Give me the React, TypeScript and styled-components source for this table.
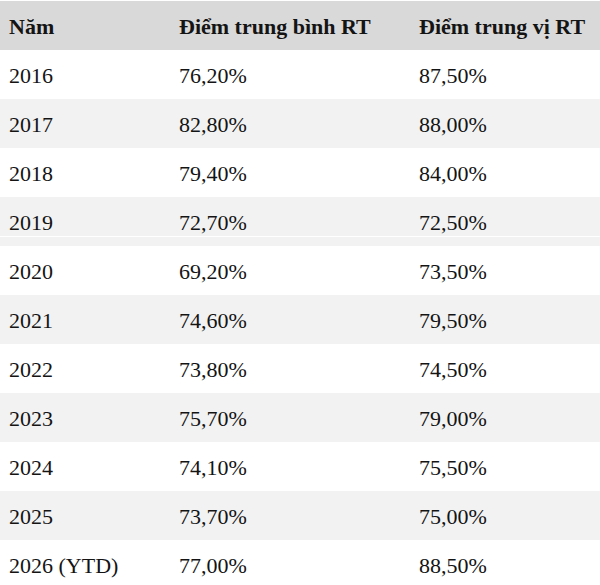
import React from 'react';
import styled, { createGlobalStyle } from 'styled-components';

interface Row {
  year: string;
  mean: string;
  median: string;
}

const rows: Row[] = [
  { year: '2016', mean: '76,20%', median: '87,50%' },
  { year: '2017', mean: '82,80%', median: '88,00%' },
  { year: '2018', mean: '79,40%', median: '84,00%' },
  { year: '2019', mean: '72,70%', median: '72,50%' },
  { year: '2020', mean: '69,20%', median: '73,50%' },
  { year: '2021', mean: '74,60%', median: '79,50%' },
  { year: '2022', mean: '73,80%', median: '74,50%' },
  { year: '2023', mean: '75,70%', median: '79,00%' },
  { year: '2024', mean: '74,10%', median: '75,50%' },
  { year: '2025', mean: '73,70%', median: '75,00%' },
  { year: '2026 (YTD)', mean: '77,00%', median: '88,50%' },
];

const GlobalStyle = createGlobalStyle`
  body {
    margin: 0;
    background: #ffffff;
    font-family: "Liberation Serif", "Times New Roman", serif;
    color: #141414;
  }
`;

const Wrapper = styled.div`
  width: 600px;
  padding-top: 1px;
  overflow: hidden;
`;

const Table = styled.div`
  display: flex;
  flex-direction: column;
`;

const TableRow = styled.div<{ $bg: string; $seam?: boolean }>`
  display: grid;
  grid-template-columns: 170px 240px 1fr;
  height: 49px;
  align-items: center;
  background: ${(p) =>
    p.$seam
      ? `linear-gradient(to bottom, ${p.$bg} 0 39px, #ffffff 39px 40px, ${p.$bg} 40px)`
      : p.$bg};
`;

const Cell = styled.div<{ $head?: boolean }>`
  padding: 2px 0 0 9px;
  font-size: 22px;
  font-weight: ${(p) => (p.$head ? 700 : 400)};
  white-space: nowrap;
`;

const App = (): JSX.Element => {
  return (
    <>
      <GlobalStyle />
      <Wrapper>
        <Table>
          <TableRow $bg="#d9d9d9">
            <Cell $head>Năm</Cell>
            <Cell $head>Điểm trung bình RT</Cell>
            <Cell $head>Điểm trung vị RT</Cell>
          </TableRow>
          {rows.map((row, index) => (
            <TableRow
              key={index}
              $bg={index % 2 === 0 ? '#ffffff' : '#f2f2f2'}
              $seam={row.year === '2019'}
            >
              <Cell>{row.year}</Cell>
              <Cell>{row.mean}</Cell>
              <Cell>{row.median}</Cell>
            </TableRow>
          ))}
        </Table>
      </Wrapper>
    </>
  );
};

export default App;
